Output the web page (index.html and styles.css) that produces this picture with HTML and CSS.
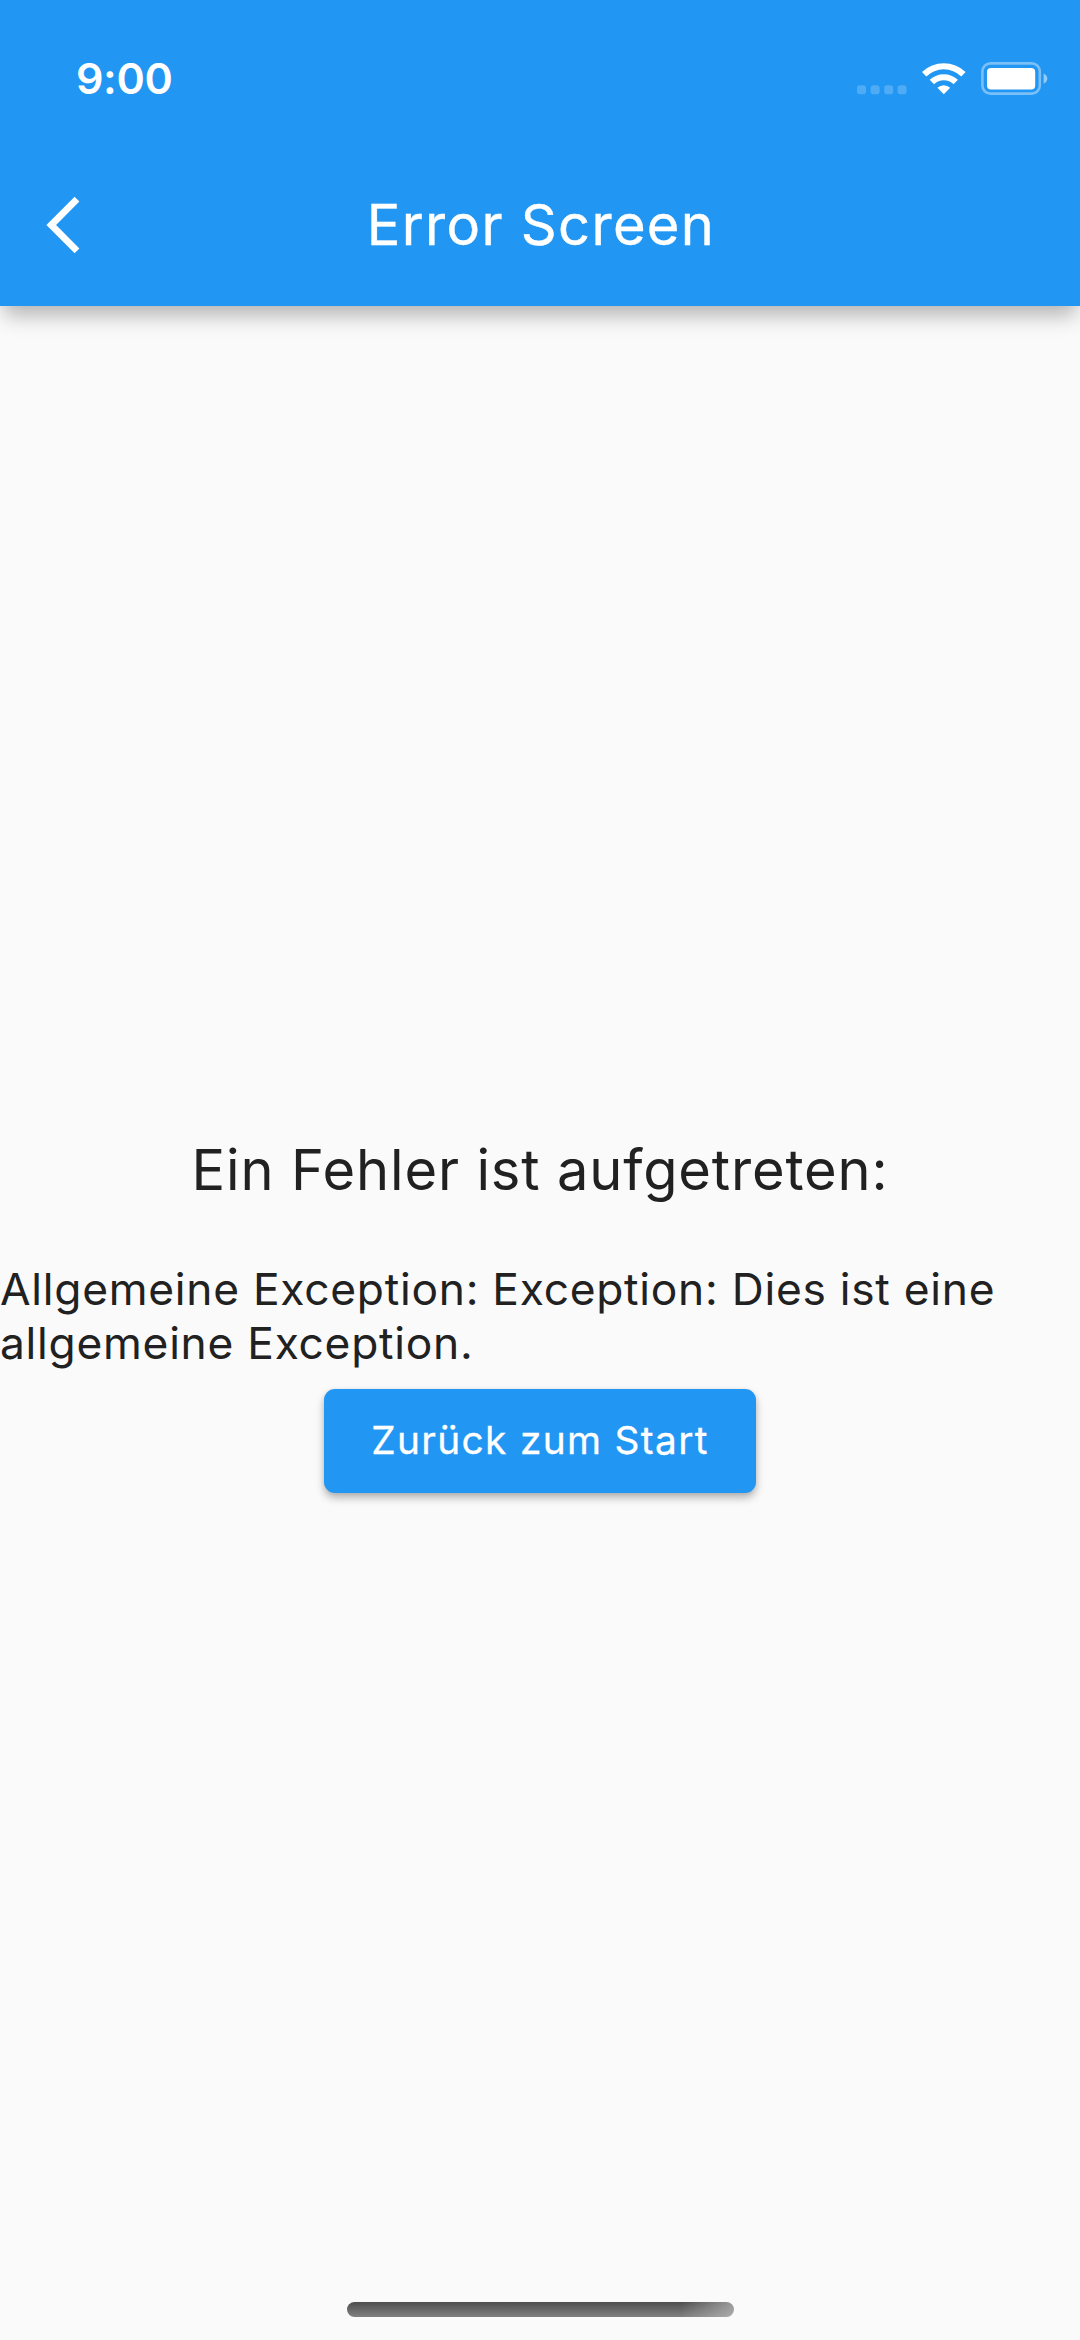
FILE: index.html
```
<!DOCTYPE html>
<html lang="de">
<head>
<meta charset="utf-8">
<title>Error Screen</title>
<link rel="stylesheet" href="styles.css">
</head>
<body>
<div class="screen">
  <header class="app-header">
    <div class="status-bar">
      <span class="clock">9:00</span>
      <svg class="status-icons" width="192" height="34" viewBox="0 0 192 34" fill="#fff">
        <g opacity=".2">
          <rect x="0" y="23.200" width="9" height="9" rx="2.800"/>
          <rect x="13.600" y="23.200" width="9" height="9" rx="2.800"/>
          <rect x="27.200" y="23.200" width="9" height="9" rx="2.800"/>
          <rect x="40.600" y="23.200" width="9" height="9" rx="2.800"/>
        </g>
        <path d="M65 10a31.500 31.500 0 0 1 43.600 0L104.300 14.400a25.300 25.300 0 0 0-35 0Z"/>
        <path d="M72.700 17.800a20.500 20.500 0 0 1 28.200 0L96.600 22.200a14.300 14.300 0 0 0-19.600 0Z"/>
        <path d="M80.400 25.700a9.300 9.300 0 0 1 12.800 0L86.800 32.200Z"/>
        <rect x="125.400" y="1.400" width="57.400" height="30.200" rx="8" fill="none" stroke="#fff" stroke-width="2.600" opacity=".4"/>
        <rect x="130" y="6" width="48.200" height="21.600" rx="4"/>
        <path d="M186.600 11.500c5 2.200 5 8 0 10.200Z" opacity=".5"/>
      </svg>
    </div>
    <div class="toolbar">
      <svg class="back" width="34" height="58" viewBox="0 0 34 58" fill="none" stroke="#fff" stroke-width="6.800"><path d="M31 3.200 5.200 29 31 54.800"/></svg>
      <h1 class="title">Error Screen</h1>
    </div>
  </header>
  <main class="content">
    <h2 class="headline">Ein Fehler ist aufgetreten:</h2>
    <p class="message">Allgemeine Exception: Exception: Dies ist eine allgemeine Exception.</p>
    <button class="action">Zurück zum Start</button>
  </main>
  <div class="home-indicator"></div>
</div>
</body>
</html>
```
FILE: styles.css
```
body {
  margin: 0;
  background: #fafafa;
  color: #212121;
  font-family: Inter, "Liberation Sans", sans-serif;
}
.screen {
  display: flex;
  flex-direction: column;
  align-items: center;
  height: 2340px;
  box-sizing: border-box;
  padding-bottom: 23px;
  overflow: hidden;
}
.app-header {
  width: 100%;
  height: 305.500px;
  flex: none;
  background: #2196f3;
  color: #fff;
  box-shadow: 0 13px 20px -4px rgba(0, 0, 0, .29);
}
.status-bar {
  display: flex;
  justify-content: space-between;
  align-items: flex-start;
  height: 145px;
  box-sizing: border-box;
  padding: 62px 31px 0 76px;
}
.clock {
  font-size: 43px;
  line-height: 32px;
  font-weight: 600;
  letter-spacing: -.400px;
}
.toolbar {
  display: grid;
  grid-template-columns: 84px 1fr 84px;
  align-items: center;
  height: 160px;
}
.back {
  margin-left: 46px;
}
.title {
  margin: 0;
  padding-left: 2px;
  text-align: center;
  font-size: 56px;
  font-weight: 400;
  letter-spacing: 1.320px;
  -webkit-text-stroke: .400px #fff;
}
.content {
  display: flex;
  flex-direction: column;
  align-items: center;
  width: 100%;
  flex: 1;
  padding-top: 830px;
}
.headline {
  margin: 0;
  font-size: 56px;
  line-height: 68px;
  font-weight: 400;
  letter-spacing: .840px;
}
.message {
  margin: 58px 0 18px;
  width: 100%;
  font-size: 44.300px;
  line-height: 54.700px;
  letter-spacing: .740px;
}
.action {
  width: 432px;
  height: 104px;
  padding: 0 0 2px;
  border: 0;
  border-radius: 11px;
  background: #2196f3;
  color: #fff;
  font: 400 38.800px Inter, "Liberation Sans", sans-serif;
  letter-spacing: 1.360px;
  -webkit-text-stroke: .300px #fff;
  box-shadow: 0 5px 8px rgba(0, 0, 0, .27), 0 1px 4px rgba(0, 0, 0, .08);
}
.home-indicator {
  width: 387px;
  height: 15px;
  border-radius: 7.500px;
  background: linear-gradient(100deg, transparent 86%, rgba(190, 190, 190, .7)), linear-gradient(#4e4e4e, #808080);
}
```
